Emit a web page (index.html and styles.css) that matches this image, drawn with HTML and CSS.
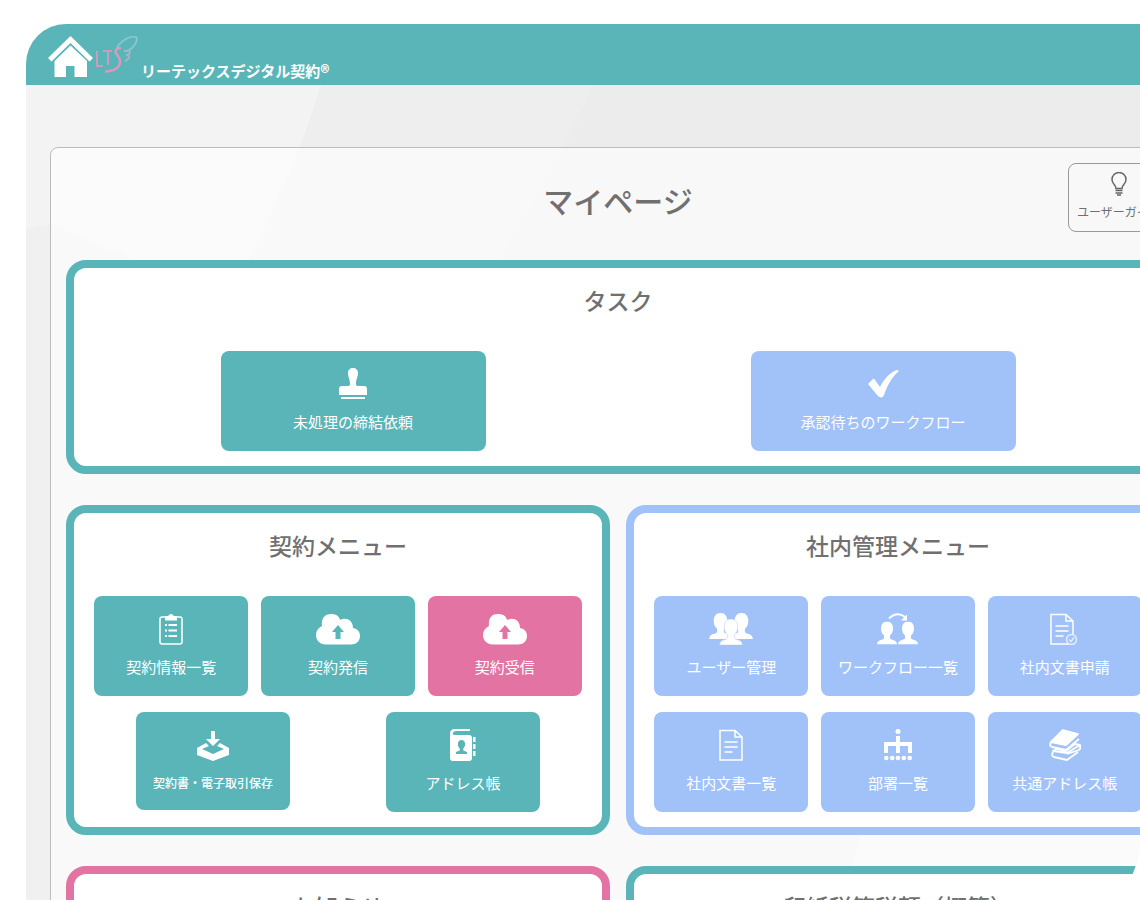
FILE: index.html
```
<!DOCTYPE html>
<html lang="ja">
<head>
<meta charset="utf-8">
<title>マイページ</title>
<link rel="stylesheet" href="styles.css">
</head>
<body>
<svg width="0" height="0" class="sprite" aria-hidden="true">
  <symbol id="doc" viewBox="0 0 32 32"><path d="M5 1.500h15l7 6.500V31H5zM20 1.500V8h7M9.500 13h13M9.500 18h13M9.500 23h8" fill="none" stroke="#fff" stroke-width="1.500"/></symbol>
  <symbol id="cloud" viewBox="0 0 44 32"><path d="M10 31.500C4 31.500 0 27.500 0 22c0-4 2-7 6-9C5 5 9 1 15 1c5 0 8 2 9 6 6-3 13 0 13 8 5 1 7 4 7 8 0 5-4 8.500-9 8.500zM22 12l-6 7h3.500v7h5v-7H28z" fill="#fff" fill-rule="evenodd"/></symbol>
  <symbol id="person" viewBox="0 0 20 23"><path d="M10 0c4 0 6 3 6 7 0 3-1 5-3 7v3c2 2 7 1 7 6H0c0-5 5-4 7-6v-3C5 12 4 10 4 7c0-4 2-7 6-7z"/></symbol>
</svg>
<div class="app">
  <svg class="facets" width="1184" height="1000" viewBox="0 0 1184 1000" aria-hidden="true">
    <path d="M0 0H1184V1000H0z" fill="#f3f3f3"/>
    <path d="M0 205L24 200L190 270L450 450V1000H0z" fill="#f0f0f0"/>
    <path d="M298 50Q270 150 205 270L450 440V1000H1184V50z" fill="#eeeeee"/>
    <path d="M572 50Q530 150 450 270L450 440H1184V50z" fill="#ececec"/>
    <path d="M775 1000Q830 850 860 700L1184 600V1000z" fill="#f4f4f4"/>
  </svg>
  <header class="topbar">
    <a class="home" href="#" aria-label="ホーム">
      <svg width="45" height="41" viewBox="0 0 45 41" fill="#fff"><path d="M22.500 0L0 22l3.500 3.500 19-18.500 19 18.500L45 22z"/><path d="M22.500 9.500L6.500 25v16H18V30h8.500v11H39V25z"/></svg>
    </a>
    <svg class="logo" width="44" height="40" viewBox="0 0 44 40" fill="none" stroke-width="2" aria-hidden="true">
      <path d="M3 15v15h6M9 15h9M14 15v14" stroke="#c99cc0" stroke-width="2"/>
      <path d="M27 12c-6 0-7 4-3 8 5 7 1 15-13 15.500" stroke="#d998be" stroke-width="2.500"/>
      <path d="M23 12C26 5 37-1 42 1c3 3-3 12-9 14h-3" stroke="#86c5ca"/>
      <path d="M31 15c5-1 6 1 3 4h-2c5 0 4 4-1 6" stroke="#a5b3c8"/>
    </svg>
    <span class="brand">リーテックスデジタル契約<small>®</small></span>
  </header>
  <main class="panel">
    <div class="panel-head">
      <h1>マイページ</h1>
      <button class="guide">
        <svg width="18" height="25" viewBox="0 0 18 25" fill="none" stroke="#666" stroke-width="1.500"><path d="M6 16.500c0-4-4-4-4-9a7 7 0 0 1 14 0c0 5-4 5-4 9zM5.500 18.500h7M5.500 21h7M7 23h4"/></svg>
        <span>ユーザーガイド</span>
      </button>
    </div>
    <section class="card teal">
      <h2>タスク</h2>
      <div class="row">
        <button class="tile wide teal"><svg width="28" height="32" viewBox="0 0 28 32" fill="#fff"><path d="M14 0c3 0 5 2 5 5 0 4-2 6-2 11 0 2 1 2 3 2h5q3 0 3 3v6H0v-6q0-3 3-3h5c2 0 3 0 3-2 0-5-2-7-2-11 0-3 2-5 5-5zM2 29h24v2H2z"/></svg><span>未処理の締結依頼</span></button>
        <button class="tile wide blue"><svg width="32" height="32" viewBox="0 0 32 32" fill="#fff"><path d="M1 16l5-5q1-1 2 1l5 7C17 11 23 4 30 2c2 0 2 1 1 2-6 5-11 14-14 23-1 3-4 3-6 1z"/></svg><span>承認待ちのワークフロー</span></button>
      </div>
    </section>
    <div class="columns">
      <section class="card teal">
        <h2>契約メニュー</h2>
        <div class="row">
          <button class="tile teal"><svg width="24" height="32" viewBox="0 0 24 32" fill="none" stroke="#fff" stroke-width="1.500"><rect x="1" y="4" width="22" height="27" rx="2"/><path d="M6 3h3q3-4 6 0h3v4.500H6z" fill="#fff" stroke="none"/><path d="M9.500 12H18M9.500 17.500H18M9.500 23H18M6 12h2M6 17.500h2M6 23h2" stroke-width="2"/></svg><span>契約情報一覧</span></button>
          <button class="tile teal"><svg width="44" height="32"><use href="#cloud"/></svg><span>契約発信</span></button>
          <button class="tile pink"><svg width="44" height="32"><use href="#cloud"/></svg><span>契約受信</span></button>
        </div>
        <div class="row">
          <button class="tile teal compact"><svg width="32" height="32" viewBox="0 0 32 32" fill="#fff"><path d="M14 2h4v8h5l-7 7-7-7h5z"/><path d="M9 14L0 19v7l16 6 16-6v-7l-9-5-3 3 7 3-11 5-11-5 7-3z"/></svg><span>契約書・電子取引保存</span></button>
          <button class="tile teal"><svg width="26" height="32" viewBox="0 0 26 32" fill="#fff"><path d="M20 0H5Q0 0 0 5v24q0 3 3 3h16q3 0 3-3V9q0-3-3-3H4Q2 5 3 3.500T6 2h14z"/><path d="M23 8h2.500v5H23zM23 15h2.500v5H23zM23 22h2.500v5H23z"/><svg x="5.500" y="11" width="12" height="14"><use href="#person" fill="#5ab5b8"/></svg></svg><span>アドレス帳</span></button>
        </div>
      </section>
      <section class="card blue">
        <h2>社内管理メニュー</h2>
        <div class="row">
          <button class="tile blue"><svg width="44" height="32" viewBox="0 0 44 32" fill="#fff"><use href="#person" width="23" height="26"/><use href="#person" x="21" width="23" height="26"/><use href="#person" x="10.500" y="6" width="23" height="26" stroke="#c5daf9" stroke-width="0.600"/></svg><span>ユーザー管理</span></button>
          <button class="tile blue"><svg width="42" height="32" viewBox="0 0 42 32" fill="#fff"><use href="#person" y="8.500" width="20" height="23"/><use href="#person" x="21" y="8.500" width="20" height="23"/><path d="M12 5.500Q20-2 28 4" fill="none" stroke="#fff" stroke-width="2"/><path d="M30 1.500v6h-6z"/></svg><span>ワークフロー一覧</span></button>
          <button class="tile blue"><svg width="30" height="32" viewBox="4 0 30 32"><use href="#doc" width="32" height="32"/><circle cx="25.500" cy="26.500" r="5" fill="#a0c2f9" stroke="#e3edfd" stroke-width="1.500"/><path d="M23 26.500l2 2 3-4" fill="none" stroke="#e3edfd" stroke-width="1.500"/></svg><span>社内文書申請</span></button>
        </div>
        <div class="row">
          <button class="tile blue"><svg width="32" height="32"><use href="#doc"/></svg><span>社内文書一覧</span></button>
          <button class="tile blue"><svg width="28" height="32" viewBox="0 0 28 32" fill="#fff"><circle cx="14" cy="2.500" r="2.500"/><path d="M12 7h4v6h12v11h-4v-7h-8v7h-4v-7H4v7H0V13h12z"/><circle cx="2.300" cy="29" r="2.300"/><circle cx="8.200" cy="29" r="2.300"/><circle cx="14" cy="29" r="2.300"/><circle cx="19.800" cy="29" r="2.300"/><circle cx="25.700" cy="29" r="2.300"/></svg><span>部署一覧</span></button>
          <button class="tile blue"><svg width="32" height="32" viewBox="0 0 32 32" fill="none" stroke="#fff" stroke-width="1.800" stroke-linejoin="round"><path d="M14 1l15 4-12 11L2 13z" fill="#fff"/><path d="M2 13q-2 4 1 5l14 3L30 10"/><path d="M8 20l9 2 9-7 5 1-13 8-14-2zM27 15l4 1q1 3-1 5l-12 4"/><path d="M4 23q-2 4 1 5l13 3 11-8"/></svg><span>共通アドレス帳</span></button>
        </div>
      </section>
      <section class="card pink">
        <h2>お知らせ</h2>
      </section>
      <section class="card teal">
        <h2>印紙税節税額（概算）</h2>
      </section>
    </div>
  </main>
</div>
<svg class="corner" width="12" height="52" viewBox="0 0 12 52" aria-hidden="true"><path d="M12 0V52H0V36Q8 22 12 0z" fill="#fff"/></svg>
</body>
</html>
```
FILE: styles.css
```
* { box-sizing: border-box; }
html, body { height: 100%; }
body {
  position: relative;
  margin: 0;
  padding-top: 24px;
  background: #fff;
  overflow: hidden;
  font-family: "Noto Sans CJK JP", sans-serif;
  color: #707070;
}
.sprite { position: absolute; }
button { font: inherit; cursor: pointer; }
.app {
  position: relative;
  margin: 0 -70px 0 26px;
  border-radius: 40px 0 0 0;
  overflow: hidden;
}
.facets { position: absolute; top: 0; left: 0; }
.topbar {
  position: relative;
  display: flex;
  align-items: flex-start;
  height: 61px;
  padding: 12px 22px 0;
  background: #5ab5b8;
}
.home { display: block; height: 41px; }
.logo { margin-left: 1px; }
.brand {
  display: flex;
  margin: 23px 0 0 3px;
  font-size: 15px;
  line-height: 24px;
  font-weight: 700;
  color: #fff;
}
.brand small { font-size: 18px; }
.panel {
  position: relative;
  margin: 62px 24px 0;
  padding: 15px;
  border: 1px solid #bcbcbc;
  border-radius: 8px;
  background: rgba(255, 255, 255, .62);
}
.panel-head {
  display: grid;
  grid-template-columns: 1fr auto 1fr;
  align-items: start;
  height: 97px;
}
h1, h2 { margin: 0; text-align: center; font-weight: 500; }
h1 { grid-column: 2; padding-top: 15px; font-size: 30px; line-height: 44px; }
.guide {
  justify-self: end;
  display: flex;
  flex-direction: column;
  align-items: center;
  width: 102px;
  height: 69px;
  padding: 8px 8px 0;
  border: 1px solid #999;
  border-radius: 8px;
  background: transparent;
  color: #707070;
  font-size: 12px;
  line-height: 18px;
  white-space: nowrap;
}
.guide span { margin-top: 6px; }
.card {
  padding: 14px 14px 15px;
  border: 8px solid;
  border-radius: 20px;
  background: #fff;
}
.card.teal { border-color: #5ab5b8; }
.card.blue { border-color: #a0c2f9; }
.card.pink { border-color: #e373a2; }
h2 { margin-bottom: 33px; font-size: 23px; line-height: 36px; }
.columns {
  display: grid;
  grid-template-columns: 1fr 1fr;
  gap: 31px 16px;
  margin-top: 31px;
}
.row { display: flex; justify-content: space-around; align-items: flex-start; }
.row + .row { margin-top: 16px; }
.tile {
  display: flex;
  flex-direction: column;
  align-items: center;
  width: 154px;
  height: 100px;
  padding: 17px 0 0;
  border: 0;
  border-radius: 8px;
  color: #fff;
  font-size: 15px;
  font-weight: 400;
  line-height: 24px;
  white-space: nowrap;
}
.tile span { margin-top: 10px; }
.tile.wide { width: 25%; }
.tile.compact { height: 98px; font-size: 12px; font-weight: 500; }
.tile.teal { background: #5ab5b8; }
.tile.blue { background: #a0c2f9; }
.tile.pink { background: #e373a2; }
.corner { position: absolute; right: 0; bottom: 0; }
```
